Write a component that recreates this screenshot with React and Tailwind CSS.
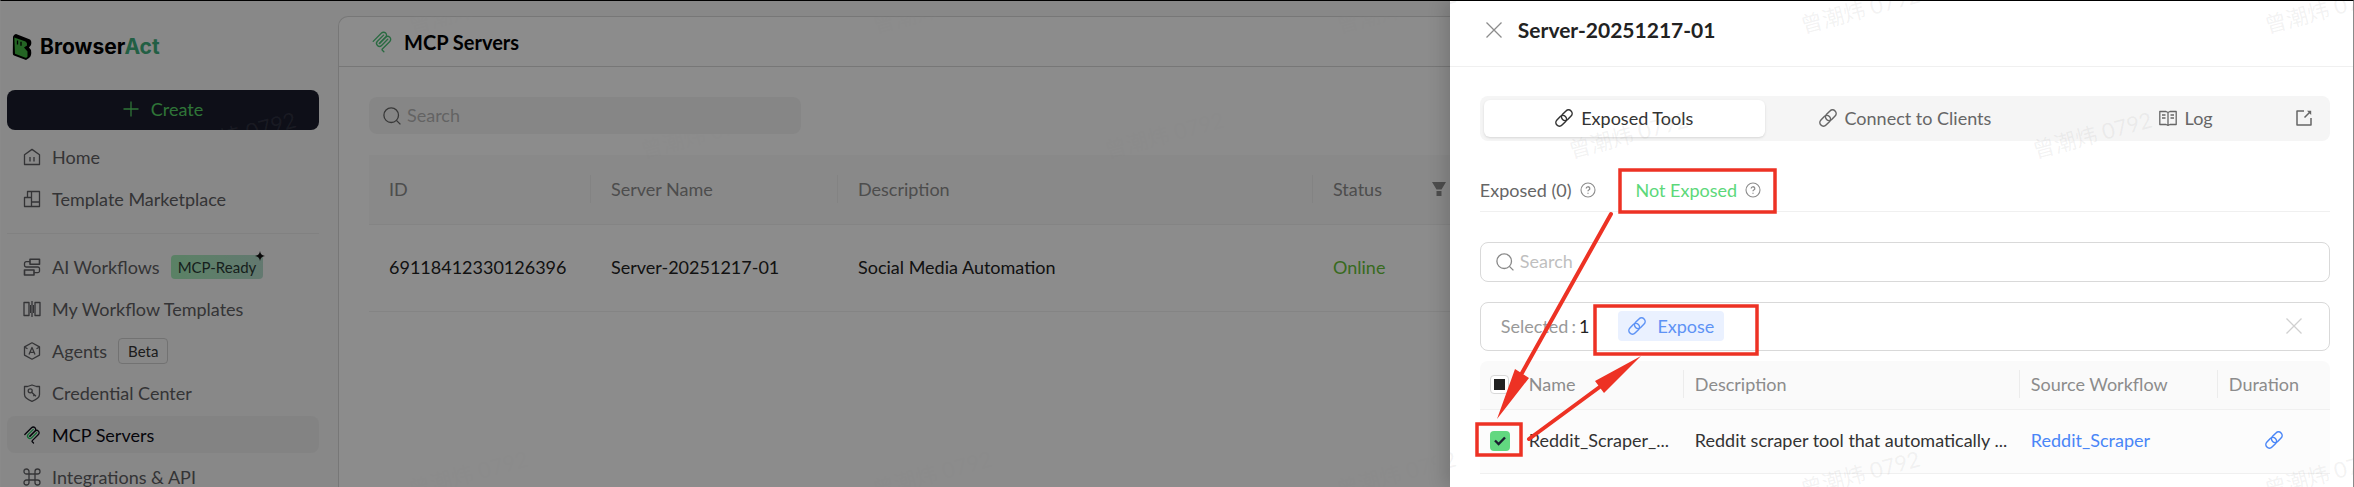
const sidebarTop = [
  { label: "Home", icon: HomeIcon },
  { label: "Template Marketplace", icon: MarketIcon },
];

const sidebarMain = [
  { label: "AI Workflows", icon: WorkflowIcon, badge: "ready" },
  { label: "My Workflow Templates", icon: TemplatesIcon },
  { label: "Agents", icon: AgentsIcon, badge: "beta" },
  { label: "Credential Center", icon: ShieldIcon },
  { label: "MCP Servers", icon: McpIcon, active: true },
  { label: "Integrations & API", icon: CommandIcon },
];

// Staggered rows of the user stamp
const watermarks = [
  { y: -3, columns: [-58, 406, 870, 1334, 1798, 2262] },
  { y: 122, columns: [174, 638, 1102, 1566, 2030] },
  { y: 461, columns: [-58, 406, 870, 1334, 1798, 2262] },
].flatMap((row) => row.columns.map((x) => ({ x, y: row.y })));

function Icon({ children, className = "size-[18px]", box = "0 0 18 18" }) {
  return (
    <svg viewBox={box} className={`shrink-0 ${className}`} fill="none" stroke="currentColor" strokeWidth="1.3" strokeLinejoin="round" aria-hidden="true">
      {children}
    </svg>
  );
}

function HomeIcon() {
  return (
    <Icon>
      <path d="M1.5 16.5V6.8L9 1.4l7.5 5.4v9.7zM7 9v4.5M11 9v4.5" />
    </Icon>
  );
}

function MarketIcon() {
  return (
    <Icon>
      <path d="M4.5 1.5h12v15h-15V7.5h3zM8.500 1.500v15M4.500 7.500h4M8.500 12h8" />
    </Icon>
  );
}

function WorkflowIcon() {
  return (
    <Icon>
      <path d="M7 1.200h9.500v5H7zM1.500 12h9.500v5H1.500z" strokeWidth="1.6" />
      <path d="M7 3.700H3.200A1.700 1.700 0 0 0 1.500 5.400v1.900A1.700 1.700 0 0 0 3.200 9h11.600a1.700 1.700 0 0 1 1.700 1.700v2.200a1.700 1.700 0 0 1-1.700 1.700H11" />
    </Icon>
  );
}

function TemplatesIcon() {
  return (
    <Icon>
      <path d="M6 2.500H1v13h5zM12 2.500h5v13h-5zM9 1v16" />
      <path d="M7.500 5v8M10.500 5v8" strokeWidth="1" />
    </Icon>
  );
}

function AgentsIcon() {
  return (
    <Icon>
      <path d="M9 .8l7.500 4.100v8.200L9 17.200l-7.500-4.100V4.900zM1.500 5l3 1.700M16.500 5l-3 1.700M6 12.500l3-7 3 7M7 10.300h4" />
    </Icon>
  );
}

function ShieldIcon() {
  return (
    <Icon>
      <path d="M1.500 2.500h3L9 1l4.500 1.500h3v8c0 3-3.500 5.300-7.500 6.800-4-1.500-7.500-3.800-7.500-6.800z" />
      <circle cx="7.200" cy="6.800" r="2" />
      <path d="M8.600 8.200l4.400 4M10.800 10.200v2" />
    </Icon>
  );
}

function CommandIcon() {
  return (
    <Icon>
      <path d="M6 6h6v6H6zM6 6V3.500A2.500 2.500 0 1 0 3.500 6zM12 6h2.500A2.500 2.500 0 1 0 12 3.500zM12 12v2.500a2.500 2.500 0 1 0 2.500-2.500zM6 12H3.500A2.500 2.500 0 1 0 6 14.500z" />
    </Icon>
  );
}

function McpIcon({ className = "size-[18px]", width = 13, accent = "#22c55e" }) {
  return (
    <svg viewBox="0 0 180 180" className={`shrink-0 ${className}`} fill="none" stroke="currentColor" strokeWidth={width} strokeLinecap="round" aria-hidden="true">
      <path d="M18 84.853 85.882 16.971c9.373-9.373 24.569-9.373 33.941 0 9.373 9.372 9.373 24.568 0 33.941L68.558 102.177" />
      <path d="M69.265 101.47 119.823 50.912c9.373-9.373 24.569-9.373 33.942 0l.353.353c9.373 9.373 9.373 24.569 0 33.941L92.725 146.6c-3.124 3.124-3.124 8.189 0 11.313l12.606 12.607" />
      <path stroke={accent} d="M102.853 33.941 52.648 84.146c-9.372 9.372-9.372 24.568 0 33.941 9.373 9.372 24.569 9.372 33.941 0l50.205-50.205" />
    </svg>
  );
}

function LinkIcon() {
  return (
    <Icon>
      <g transform="rotate(-45 9 9)" strokeWidth="1.5">
        <rect x="-1" y="5.400" width="12" height="7.200" rx="3.600" />
        <rect x="7" y="5.400" width="12" height="7.200" rx="3.600" />
      </g>
    </Icon>
  );
}

function SearchIcon() {
  return (
    <Icon>
      <circle cx="8.200" cy="8.200" r="7.300" />
      <path d="m13.400 13.400 4 4" />
    </Icon>
  );
}

function PlusIcon() {
  return (
    <Icon className="size-4" box="0 0 16 16">
      <path d="M8 .5v15M.5 8h15" />
    </Icon>
  );
}

function CloseIcon() {
  return (
    <Icon className="size-4" box="0 0 16 16">
      <path d="m.5.5 15 15M15.500.5l-15 15" />
    </Icon>
  );
}

function HelpIcon() {
  return (
    <Icon className="size-4 text-[#8c8c8c]" box="0 0 16 16">
      <circle cx="8" cy="8" r="7" strokeWidth="1.1" />
      <path d="M6.200 6.500a1.800 1.700 0 1 1 2.600 1.500c-.5.300-.8.600-.8 1.300M8 10.700v1.100" />
    </Icon>
  );
}

function BookIcon() {
  return (
    <Icon>
      <path d="M.8 2.500H7L9 3.500l2-1h6.200v13H11l-2 .8-2-.8H.8zM9 3.500v12.800M3 6h3.500M3 9h3.500M11.500 6H15M11.500 9H15" />
    </Icon>
  );
}

function Logo() {
  return (
    <a href="#home" className="flex h-8 items-center gap-2 pl-[5px]">
      <svg viewBox="0 0 20 28" className="h-7 w-5" aria-hidden="true">
        <path d="M1 4.500Q1 2 4 1l14 5.500q2 1.500 1 5.500l-2 2.500 2 2.500q1 6-2 8l-3 2L2 22.500Q.7 22 .8 20z" fill="#000" />
        <path d="M2.300 4.500 13.500 8.500q2 1 1.500 4l-3 2 3.500 4v5q-.5 1.500-2 1.300L3 20.800z" fill="#43b843" />
        <path d="M5.500 7.500v4M9 8.700v4" stroke="#000" strokeWidth="1.300" />
      </svg>
      <span className="font-[Inter] text-[21px] leading-8 font-bold text-black">
        Browser<span className="text-[#3fae7c]">Act</span>
      </span>
    </a>
  );
}

function NavItem({ item }) {
  const ItemIcon = item.icon;
  return (
    <a
      href="#nav"
      className={
        item.active
          ? "flex h-[37px] items-center gap-[11px] rounded-lg bg-[#efefef] px-4 text-[#0a0a14]"
          : "flex h-[37px] items-center gap-[11px] rounded-lg px-4 text-[#5f5f63]"
      }
    >
      <ItemIcon />
      <span>{item.label}</span>
      {item.badge === "ready" && (
        <span className="relative rounded bg-linear-to-r from-[#a5ecb8] to-[#b4dccc] px-[7px] text-[15px] leading-6 text-[#2a3a35]">
          MCP-Ready
          <svg viewBox="0 0 10 10" className="absolute -top-1 -right-0.5 size-[10px]" aria-hidden="true">
            <path d="M5 0q.6 4.400 5 5-4.400.6-5 5-.6-4.400-5-5 4.400-.6 5-5z" fill="#111" />
          </svg>
        </span>
      )}
      {item.badge === "beta" && (
        <span className="rounded border border-[#d0d0d0] px-[9px] text-[15px] leading-6 text-[#333]">Beta</span>
      )}
    </a>
  );
}

function Sidebar() {
  return (
    <aside className="flex w-[337px] shrink-0 flex-col pr-[19px] pl-[6px]">
      <div className="pt-[30px] pb-[27px]">
        <Logo />
      </div>
      <button type="button" className="flex h-10 shrink-0 items-center justify-center gap-3 rounded-lg bg-[#1a1c2c] pb-[2px] text-[#56d466]">
        <PlusIcon />
        Create
      </button>
      <nav className="mt-2 flex flex-col gap-[5px] border-b border-[#ececec] pb-4">
        {sidebarTop.map((item) => (
          <NavItem key={item.label} item={item} />
        ))}
      </nav>
      <nav className="mt-[14px] flex flex-col gap-[5px]">
        {sidebarMain.map((item) => (
          <NavItem key={item.label} item={item} />
        ))}
      </nav>
    </aside>
  );
}

function HeadCell({ children }) {
  return <div className="flex h-7 items-center justify-between border-r border-[#efefef] px-5">{children}</div>;
}

function ServersPage() {
  return (
    <main className="mt-[15px] min-w-0 flex-1 rounded-tl-[10px] border-t border-l border-[#d9d9d9] bg-white">
      <header className="flex h-[50px] items-center gap-[11px] border-b border-[#d9d9d9] px-8">
        <McpIcon className="size-[22px] text-[#4cc277]" width={11} accent="#4cc277" />
        <h1 className="text-xl leading-6 font-bold text-black">MCP Servers</h1>
      </header>
      <div className="px-[30px] pt-[30px]">
        <label className="flex h-[37px] w-[432px] items-center gap-[6px] rounded-lg bg-[#f5f5f5] px-[14px] text-[#666]">
          <SearchIcon />
          <input type="text" placeholder="Search" aria-label="Search servers" className="min-w-0 flex-1 pb-[2px] outline-none placeholder:text-[#b5b5b5]" />
        </label>
        <table className="mt-[21px] w-full table-fixed text-left">
          <thead className="bg-[#fafafa] text-[#8c8c8c]">
            <tr className="h-[69px] border-b border-[#f0f0f0]">
              <th className="w-[222px] p-0 font-normal"><HeadCell>ID</HeadCell></th>
              <th className="w-[247px] p-0 font-normal"><HeadCell>Server Name</HeadCell></th>
              <th className="w-[475px] p-0 font-normal"><HeadCell>Description</HeadCell></th>
              <th className="w-[154px] p-0 font-normal">
                <HeadCell>
                  Status
                  <svg viewBox="0 0 14 14" className="size-[14px]" fill="#8c8c8c" aria-hidden="true">
                    <path d="M0 0h14L9.500 7.500h-5zM4.500 9h5v5h-5z" />
                  </svg>
                </HeadCell>
              </th>
              <th className="p-0" />
            </tr>
          </thead>
          <tbody>
            <tr className="h-[87px] border-b border-[#f0f0f0] text-[#222]">
              <td className="px-5 pb-[2px]">69118412330126396</td>
              <td className="px-5 pb-[2px]">Server-20251217-01</td>
              <td className="px-5 pb-[2px]">Social Media Automation</td>
              <td className="px-5 pb-[2px] text-[#67c23a]">Online</td>
              <td />
            </tr>
          </tbody>
        </table>
      </div>
    </main>
  );
}

function ToolTabs() {
  return (
    <div className="grid h-[45px] grid-cols-3 rounded-lg bg-[#f5f5f5] p-1 text-[#666]">
      <button type="button" className="flex items-center justify-center gap-2 rounded-md bg-white pb-[2px] text-[#333] shadow-sm">
        <LinkIcon />
        Exposed Tools
      </button>
      <button type="button" className="flex items-center justify-center gap-2 pb-[2px]">
        <LinkIcon />
        Connect to Clients
      </button>
      <div className="grid grid-cols-[1fr_auto_1fr] items-center pb-[2px]">
        <button type="button" className="col-start-2 flex items-center gap-2">
          <BookIcon />
          Log
        </button>
        <button type="button" aria-label="Open log in new tab" className="mr-[14px] justify-self-end">
          <Icon className="size-4" box="0 0 16 16">
            <path d="M8 1H1v14h14V8M8.500 7.500l6-6" strokeWidth="1.500" />
            <path d="M11 .8h4.200V5z" fill="currentColor" stroke="none" />
          </Icon>
        </button>
      </div>
    </div>
  );
}

function ToolsTable() {
  return (
    <table className="mt-[10px] w-full table-fixed text-left">
      <thead className="bg-[#fafafa] text-[#8c8c8c]">
        <tr className="h-12 border-b border-[#f0f0f0]">
          <th className="w-[38px] rounded-tl-lg p-0 pl-[10px] font-normal">
            <span className="grid size-[19px] place-items-center">
              <input type="checkbox" aria-label="Select all tools" className="col-start-1 row-start-1 size-[19px] appearance-none rounded border border-[#d9d9d9] bg-white" />
              <span className="pointer-events-none col-start-1 row-start-1 size-[11px] bg-[#222]" />
            </span>
          </th>
          <th className="w-[166px] p-0 pb-[2px] font-normal">
            <div className="flex h-7 items-center border-r border-[#ececec] pl-[11px]">Name</div>
          </th>
          <th className="w-[336px] p-0 pb-[2px] font-normal">
            <div className="flex h-7 items-center border-r border-[#ececec] pl-[11px]">Description</div>
          </th>
          <th className="w-[198px] p-0 pb-[2px] font-normal">
            <div className="flex h-7 items-center border-r border-[#ececec] pl-[11px]">Source Workflow</div>
          </th>
          <th className="rounded-tr-lg p-0 pb-[2px] pl-[11px] font-normal">Duration</th>
        </tr>
      </thead>
      <tbody className="bg-[#fcfcfc]">
        <tr className="h-16 border-b border-[#f0f0f0] text-[#333]">
          <td className="pl-[10px]">
            <span className="grid size-5 place-items-center">
              <input type="checkbox" defaultChecked aria-label="Select Reddit_Scraper" className="col-start-1 row-start-1 size-5 appearance-none rounded bg-[#62d880]" />
              <svg viewBox="0 0 12 10" className="pointer-events-none col-start-1 row-start-1 h-[10px] w-3" fill="none" stroke="#1a2030" strokeWidth="2.400" aria-hidden="true">
                <path d="M1 4.500 4.600 8 11 1.500" />
              </svg>
            </span>
          </td>
          <td className="px-[11px] pb-[3px] whitespace-nowrap">Reddit_Scraper_...</td>
          <td className="px-[11px] pb-[3px] whitespace-nowrap">Reddit scraper tool that automatically ...</td>
          <td className="px-[11px] pb-[3px]">
            <a href="#workflow" className="text-[#4a86f7]">Reddit_Scraper</a>
          </td>
          <td className="pb-[2px]">
            <button type="button" aria-label="Expose tool" className="mx-auto block text-[#4a86f7]">
              <LinkIcon />
            </button>
          </td>
        </tr>
      </tbody>
    </table>
  );
}

// Red call-outs showing the order of clicks
function Callouts() {
  return (
    <svg className="pointer-events-none absolute inset-0 size-full" fill="none" stroke="#ed3224" aria-hidden="true">
      <g strokeWidth="3.500">
        <rect x="170" y="169" width="155" height="42" />
        <rect x="145" y="305" width="162" height="48" />
        <rect x="27" y="423" width="44" height="31" />
        <path d="M161 213 72 372M79 438l72-53" strokeWidth="4" strokeLinecap="round" />
      </g>
      <path d="m47 418 18-50 14 9zM191 355l-46 25 9 12z" fill="#ed3224" stroke="none" />
    </svg>
  );
}

function ServerDrawer() {
  return (
    <section className="absolute inset-y-0 right-0 w-[38.4%] bg-white shadow-[-6px_0_16px_rgba(0,0,0,0.15)]">
      <header className="flex h-[66px] items-center gap-4 border-b border-[#f0f0f0] px-9 pb-2">
        <button type="button" aria-label="Close" className="text-[#8c8c8c]">
          <CloseIcon />
        </button>
        <h2 className="text-[21px] leading-6 font-bold text-[#222]">Server-20251217-01</h2>
      </header>
      <div className="pt-[29px] pr-[23px] pl-[30px]">
        <ToolTabs />
        <div className="mt-7 flex h-[43px] items-center gap-10 border-b border-[#f0f0f0] text-[#666]">
          <button type="button" className="flex items-center gap-2">
            Exposed (0) <HelpIcon />
          </button>
          <button type="button" className="flex items-center gap-2 text-[#5cd87a]">
            Not Exposed <HelpIcon />
          </button>
        </div>
        <label className="mt-[30px] flex h-10 items-center gap-[6px] rounded-lg border border-[#d9d9d9] px-[15px] text-[#888]">
          <SearchIcon />
          <input type="text" placeholder="Search" aria-label="Search tools" className="min-w-0 flex-1 pb-[2px] outline-none placeholder:text-[#bfbfbf]" />
        </label>
        <div className="mt-5 flex h-[49px] items-center rounded-lg border border-[#d9d9d9] pr-[27px] pb-[2px] pl-5 text-[#999]">
          <span>Selected</span>
          <span className="px-[3px]">:</span>
          <span className="text-[#222]">1</span>
          <button type="button" className="ml-[29px] flex h-[30px] items-center gap-[11px] rounded bg-[#eaf1ff] px-[10px] text-[#5e93f5]">
            <LinkIcon />
            Expose
          </button>
          <button type="button" aria-label="Clear selection" className="ml-auto text-[#d0d0d0]">
            <CloseIcon />
          </button>
        </div>
        <ToolsTable />
      </div>
      <Callouts />
    </section>
  );
}

export default function App() {
  return (
    <div className="relative h-screen overflow-hidden border-x border-t border-x-[#8a8a8a] border-t-black bg-[#f7f7f7] font-[Lato,'Noto_Sans_CJK_SC',sans-serif] text-lg leading-6">
      <div className="flex h-full">
        <Sidebar />
        <ServersPage />
      </div>
      <div className="absolute inset-0 bg-black/45" />
      <ServerDrawer />
      <div className="pointer-events-none absolute inset-0 overflow-hidden" aria-hidden="true">
        {watermarks.map((mark) => (
          <span
            key={`${mark.x}-${mark.y}`}
            className="absolute -rotate-15 text-[22px] leading-6 whitespace-nowrap text-[#888]/10"
            style={{ left: mark.x, top: mark.y }}
          >
            曾潮炜 0792
          </span>
        ))}
      </div>
    </div>
  );
}
